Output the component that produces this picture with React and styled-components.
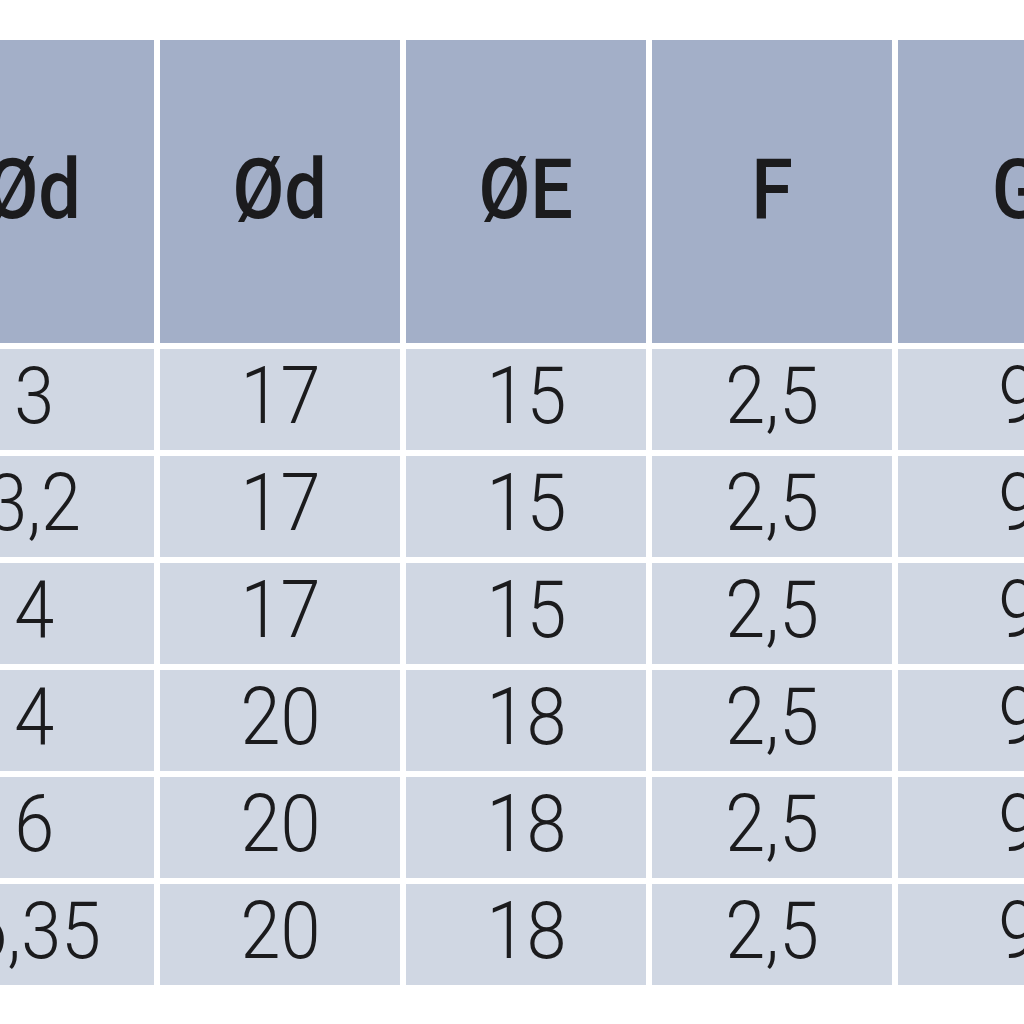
import styled, { createGlobalStyle } from "styled-components";

const GlobalStyle = createGlobalStyle`
  html, body {
    margin: 0;
    padding: 0;
    background: #ffffff;
    overflow: hidden;
  }
`;

const headers = ["Ød", "Ød", "ØE", "F", "G"];

const rows = [
  ["3", "17", "15", "2,5", "9"],
  ["3,2", "17", "15", "2,5", "9"],
  ["4", "17", "15", "2,5", "9"],
  ["4", "20", "18", "2,5", "9"],
  ["6", "20", "18", "2,5", "9"],
  ["6,35", "20", "18", "2,5", "9"],
];

const App = () => {
  return (
    <Page>
      <GlobalStyle />
      <Table>
        {headers.map((h, i) => (
          <HeadCell key={"h" + i}>
            <Label $head>{h}</Label>
          </HeadCell>
        ))}
        {rows.map((row, r) =>
          row.map((v, c) => (
            <DataCell key={r + "-" + c}>
              <Label>{v}</Label>
            </DataCell>
          ))
        )}
      </Table>
    </Page>
  );
};

const Page = styled.div`
  width: 1024px;
  height: 1024px;
  overflow: hidden;
  background: #ffffff;
`;

const Table = styled.div`
  display: grid;
  grid-template-columns: repeat(5, 240px);
  grid-template-rows: 303px repeat(6, 101px);
  column-gap: 6px;
  row-gap: 6px;
  margin-left: -86px;
  padding-top: 40px;
  width: 1230px;
`;

const Cell = styled.div`
  display: flex;
  align-items: center;
  justify-content: center;
  overflow: visible;
`;

const HeadCell = styled(Cell)`
  background: #a3afc8;
  padding-bottom: 4px;
`;

const DataCell = styled(Cell)`
  background: #d0d7e3;
  padding-bottom: 8px;
`;

const Label = styled.span`
  display: inline-block;
  font-family: Roboto, "Liberation Sans", sans-serif;
  font-size: ${(p) => (p.$head ? "84px" : "80px")};
  font-weight: ${(p) => (p.$head ? 500 : 300)};
  color: #1b1b1d;
  line-height: 1;
  transform: scaleX(0.9);
  white-space: nowrap;
`;

export default App;
